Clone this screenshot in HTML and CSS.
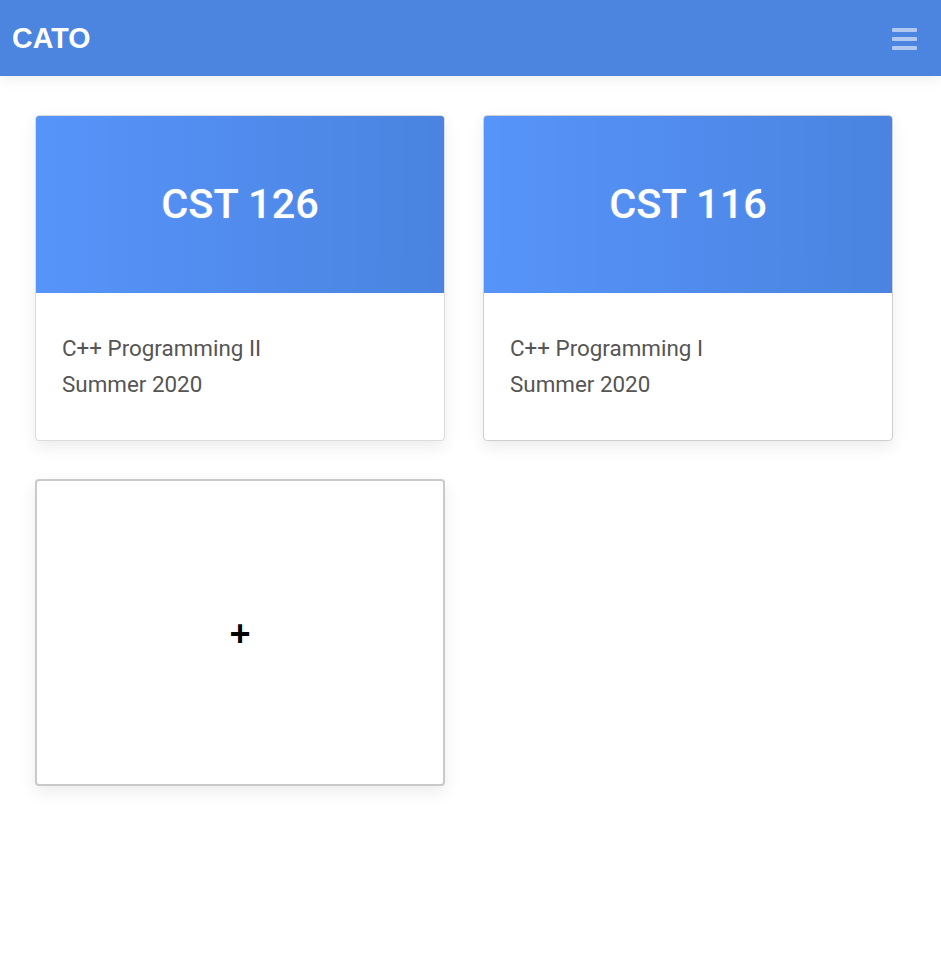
FILE: index.html
```html
<!DOCTYPE html>
<html>
<head>
<meta charset="utf-8">
<link rel="stylesheet" href="styles.css">
</head>
<body>
<header class="topbar">
  <div class="brand">CATO</div>
  <button class="menu" aria-label="menu"><span></span><span></span><span></span></button>
</header>
<main class="grid">
  <div class="card card-first">
    <div class="card-head"><h2>CST 126</h2></div>
    <div class="card-body"><p>C++ Programming II</p><p>Summer 2020</p></div>
  </div>
  <div class="card">
    <div class="card-head"><h2>CST 116</h2></div>
    <div class="card-body"><p>C++ Programming I</p><p>Summer 2020</p></div>
  </div>
  <div class="card add-card"><span class="plus">+</span></div>
</main>
</body>
</html>
```
FILE: styles.css
```css
* { box-sizing: border-box; }
html, body { margin: 0; padding: 0; background: #fff; }
body { font-family: Roboto, "Noto Sans", sans-serif; }

.topbar {
  height: 76px;
  background: #4b85e0;
  display: flex;
  align-items: center;
  justify-content: space-between;
  padding: 0 24px 0 12px;
  box-shadow: 0 2px 14px rgba(0,0,0,0.08);
}
.brand {
  font-family: "Liberation Sans", Arial, sans-serif;
  font-weight: 700;
  font-size: 28.6px;
  color: #fff;
  margin-top: 1px;
}
.menu {
  background: none;
  border: 0;
  padding: 0;
  width: 25px;
  display: flex;
  flex-direction: column;
  gap: 5px;
  margin-top: 1px;
}
.menu span {
  display: block;
  height: 4px;
  width: 25px;
  background: #b3c8f0;
  border-radius: 1px;
}

.grid {
  display: grid;
  grid-template-columns: 410px 410px;
  column-gap: 38px;
  row-gap: 38px;
  padding: 39px 35px;
  align-items: start;
}
.card {
  background: #fff;
  border: 1px solid #cfcfcf;
  border-radius: 4px;
  overflow: hidden;
  box-shadow: 0 6px 16px rgba(0,0,0,0.08);
}
.card-first { border-color: #dcdcdc; }
.card-head {
  height: 177px;
  background: linear-gradient(90deg, #5794fa 0%, #4a84e0 100%);
  display: flex;
  align-items: center;
  justify-content: center;
}
.card-head h2 {
  margin: 0;
  color: #fff;
  font-weight: 500;
  font-size: 41.5px;
  text-shadow: 0 0 2px rgba(255,255,255,0.2);
  margin-top: -2px;
}
.card-body {
  height: 147px;
  padding: 37px 26px 0;
}
.card-body p {
  margin: 0;
  font-size: 22.4px;
  line-height: 36px;
  color: #555;
}
.add-card {
  height: 307px;
  border: 2px solid #c9c9c9;
  display: flex;
  align-items: center;
  justify-content: center;
}
.plus {
  font-family: "Liberation Sans", Arial, sans-serif;
  font-weight: 700;
  font-size: 36px;
  color: #000;
  margin-top: 2px;
}
```
